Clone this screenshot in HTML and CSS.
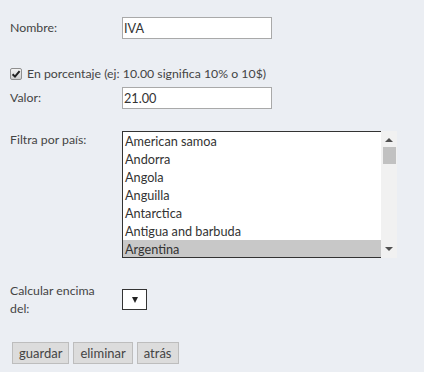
FILE: index.html
```html
<!DOCTYPE html>
<html lang="es">
<head>
<meta charset="utf-8">
<title>Impuesto</title>
<link rel="stylesheet" href="styles.css">
</head>
<body>
<form class="form">
  <div class="row row-nombre">
    <label class="lbl">Nombre:</label>
    <div class="txt">IVA</div>
  </div>
  <div class="check-row">
    <span class="chk"><svg viewBox="0 0 12 12" width="12" height="12"><path d="M2.6 6.2 L5 8.6 L9.6 3.2" fill="none" stroke="#222" stroke-width="2"/></svg></span>
    <span class="check-text">En porcentaje (ej: 10.00 significa 10% o 10$)</span>
  </div>
  <div class="row row-valor">
    <label class="lbl">Valor:</label>
    <div class="txt">21.00</div>
  </div>
  <div class="row row-top row-filtra">
    <label class="lbl">Filtra por país:</label>
    <div class="listbox">
      <div class="options">
        <div class="opt">American samoa</div>
        <div class="opt">Andorra</div>
        <div class="opt">Angola</div>
        <div class="opt">Anguilla</div>
        <div class="opt">Antarctica</div>
        <div class="opt">Antigua and barbuda</div>
        <div class="opt opt-sel">Argentina</div>
      </div>
      <div class="sbar">
        <span class="arrow arrow-up"></span>
        <span class="thumb"></span>
        <span class="spacer"></span>
        <span class="arrow arrow-down"></span>
      </div>
    </div>
  </div>
  <div class="row row-top row-calc">
    <label class="lbl lbl-wrap">Calcular encima del:</label>
    <div class="dropdown"><span class="caret"></span></div>
  </div>
  <div class="buttons">
    <button type="button" class="btn">guardar</button>
    <button type="button" class="btn">eliminar</button>
    <button type="button" class="btn">atrás</button>
  </div>
</form>
</body>
</html>
```
FILE: styles.css
```css
html, body {
  margin: 0;
  padding: 0;
  background: #ebeef3;
}
body {
  font-family: Lato, "Open Sans", sans-serif;
  font-size: 12.3px;
  line-height: 18px;
  color: #444;
}
.form {
  padding: 17px 10px 0 10px;
}
.row {
  display: flex;
  align-items: center;
}
.row-top {
  align-items: flex-start;
}
.lbl {
  width: 112px;
  flex: none;
}
.lbl-wrap {
  width: 100px;
  margin-right: 12px;
}
.txt {
  box-sizing: border-box;
  width: 150px;
  height: 22px;
  border: 1px solid #a9a9a9;
  background: #fff;
  padding: 1px 1px 0 1px;
  line-height: 18px;
  font-size: 12.7px;
  color: #333;
}
.check-row {
  display: flex;
  align-items: center;
  margin-top: 26px;
  height: 18px;
}
.chk {
  box-sizing: border-box;
  width: 12px;
  height: 12px;
  border: 1px solid #8f8f8f;
  border-radius: 2px;
  background: linear-gradient(#f4f4f4, #cfcfcf);
  margin-right: 5px;
  display: flex;
  align-items: center;
  justify-content: center;
}
.chk svg {
  display: block;
  flex: none;
}
.row-valor {
  margin-top: 4px;
}
.row-filtra {
  margin-top: 22px;
}
.listbox {
  display: flex;
  width: 275px;
  height: 127px;
  box-sizing: border-box;
  border-top: 1px solid #333;
  border-left: 1px solid #333;
  border-bottom: 1px solid #333;
  background: #fff;
}
.options {
  flex: 1;
  overflow: hidden;
}
.opt {
  height: 18px;
  line-height: 18px;
  padding-left: 2px;
  font-size: 12.7px;
  color: #333;
  white-space: nowrap;
}
.opt-sel {
  background: #c8c8c8;
}
.sbar {
  width: 16px;
  flex: none;
  background: #f1f1f1;
  display: flex;
  flex-direction: column;
  align-items: center;
  margin-top: -1px;
  margin-bottom: -1px;
}
.arrow {
  width: 0;
  height: 0;
  border-left: 4px solid transparent;
  border-right: 4px solid transparent;
  margin: 7px 0 5px;
}
.arrow-up {
  border-bottom: 4px solid #505050;
}
.arrow-down {
  border-top: 4px solid #505050;
  margin: 5px 0 7px;
}
.thumb {
  width: 13px;
  height: 17px;
  background: #c1c1c1;
}
.spacer {
  flex: 1;
}
.row-calc {
  margin-top: 24px;
}
.dropdown {
  box-sizing: border-box;
  width: 25px;
  height: 21px;
  margin-top: 7px;
  border: 1px solid #333;
  background: #fff;
  display: flex;
  align-items: center;
  justify-content: center;
}
.caret {
  width: 0;
  height: 0;
  border-left: 3px solid transparent;
  border-right: 3px solid transparent;
  border-top: 6px solid #222;
}
.buttons {
  display: flex;
  gap: 4px;
  margin-top: 24px;
  padding-left: 2px;
}
.btn {
  font-family: inherit;
  font-size: 13px;
  line-height: 18px;
  color: #444;
  background: #dcdcdc;
  border: 1px solid #bdbdbd;
  border-radius: 0;
  height: 22px;
  padding: 1px 6px;
  margin: 0;
}
```
